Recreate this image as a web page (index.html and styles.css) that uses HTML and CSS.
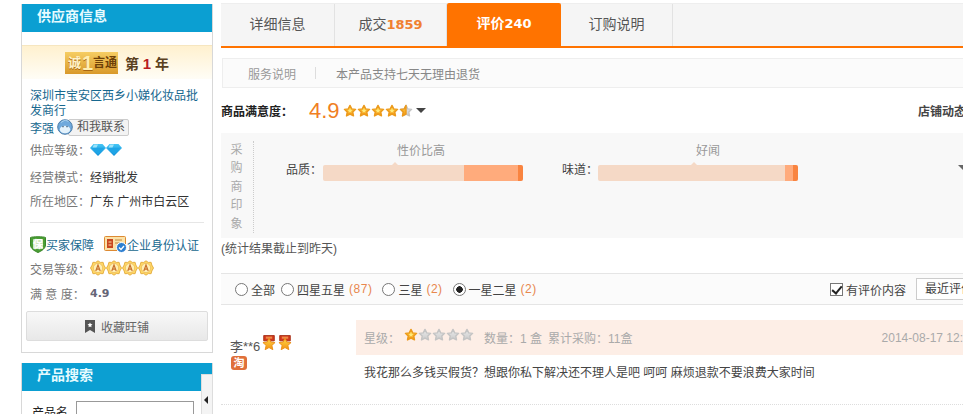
FILE: index.html
```html
<!DOCTYPE html>
<html lang="zh">
<head>
    <meta charset="UTF-8">
    <title>评价</title>
    <link rel="stylesheet" href="styles.css">
</head>
<body>

<svg class="defs" width="0" height="0">
    <defs>
        <linearGradient id="gold" x1="0" y1="0" x2="0" y2="1"><stop offset="0" stop-color="#ffd84a"/><stop offset="1" stop-color="#f3920f"/></linearGradient>
        <linearGradient id="grey" x1="0" y1="0" x2="0" y2="1"><stop offset="0" stop-color="#ececec"/><stop offset="1" stop-color="#c9c9c9"/></linearGradient>
        <linearGradient id="blue" x1="0" y1="0" x2="0" y2="1"><stop offset="0" stop-color="#45c6f5"/><stop offset="1" stop-color="#0f8ed8"/></linearGradient>
    </defs>
    <symbol id="star" viewBox="0 0 12 12"><path d="M6 1.200l1.500 3 3.300.4-2.400 2.300.6 3.300L6 8.600l-3 1.600.6-3.300-2.400-2.300 3.300-.4z" fill="url(#gold)" stroke="#ec9a1c" stroke-width="1.200" stroke-linejoin="round"/><path d="M6 3.500l.6 1.500 1.400.2-1 1 .2 1.300L6 6.800l-1.200.7.200-1.300-1-1 1.400-.2z" fill="#ffe97a"/></symbol>
    <symbol id="star-off" viewBox="0 0 12 12"><path d="M6 1.200l1.500 3 3.300.4-2.400 2.300.6 3.300L6 8.600l-3 1.600.6-3.300-2.400-2.300 3.300-.4z" fill="url(#grey)" stroke="#c4c4c4" stroke-width="1.200" stroke-linejoin="round"/></symbol>
    <symbol id="star-half" viewBox="0 0 12 12"><path d="M6 1.200l1.500 3 3.300.4-2.400 2.300.6 3.300L6 8.600l-3 1.600.6-3.300-2.400-2.300 3.300-.4z" fill="url(#grey)" stroke="#c4c4c4" stroke-width="1.200" stroke-linejoin="round"/><path d="M6 1.200v7.400l-3 1.600.6-3.300-2.400-2.300 3.300-.4z" fill="url(#gold)" stroke="#ec9a1c" stroke-width="1.200" stroke-linejoin="round"/></symbol>
    <symbol id="diamond" viewBox="0 0 16 13"><path d="M3.500 1h9L16 5 8 13 0 5z" fill="url(#blue)"/><path d="M1.500 4.800h13L8 11.500z" fill="#1ea5e6"/><path d="M4 1.500L2.500 4.500h4L8 1.500z" fill="#9be3fb"/></symbol>
    <symbol id="crown" viewBox="0 0 16 16"><path d="M8 .8l2.300 1.600 2.800-.1.700 2.700L15.500 8l-1.700 3-.7 2.700-2.800-.1L8 15.200l-2.300-1.600-2.800.1-.7-2.700L.5 8l1.700-3 .7-2.700 2.800.1z" fill="#ffd766" stroke="#e2a93a" stroke-width=".9" stroke-linejoin="round"/><circle cx="8" cy="8" r="4.700" fill="#ffeeb4" stroke="#eab84e" stroke-width=".7"/><path d="M5.800 11L8 5l2.200 6M6.600 9.200h2.800" fill="none" stroke="#c8702c" stroke-width="1.200"/></symbol>
    <symbol id="medal" viewBox="0 0 15 16"><path d="M2.500.5h10v5h-10z" fill="#d2381c" stroke="#a32a12" stroke-width=".8"/><path d="M4.500 1.500h6v2h-6z" fill="#ef8a4a"/><path d="M7.500 3l1.700 3.600 4 .5-3 2.700.9 4-3.600-2-3.600 2 .9-4-3-2.700 4-.5z" fill="url(#gold)" stroke="#ec8f18" stroke-width=".9" stroke-linejoin="round"/></symbol>
</svg>

<div class="page">

    <!-- left column -->
    <div class="side">
        <div class="box supplier">
            <h3 class="box-title">供应商信息</h3>
            <div class="cxt">
                <span class="cxt-logo"><i>诚</i><b>1</b><i>言</i><i>通</i></span>
                <span class="cxt-year">第 <b>1</b> 年</span>
            </div>
            <div class="info">
                <a class="company">深圳市宝安区西乡小娣化妆品批发商行</a>
                <div class="contact">
                    <a>李强</a>
                    <svg class="ww" width="16" height="16" viewBox="0 0 16 16"><circle cx="8" cy="8" r="7.300" fill="#6fa9dc" stroke="#4d7da8"/><ellipse cx="8" cy="10.500" rx="5.200" ry="3.800" fill="#e4f2fb"/><path d="M4 3.500L8 1l3.500 1.500" fill="none" stroke="#a9d2f0"/><path d="M6 7v1.200M10 7v1.200" stroke="#2c4d6b" stroke-width="1.200"/></svg>
                    <span class="talk">和我联系</span>
                </div>
                <div class="row level"><span class="lbl">供应等级：</span><svg width="16" height="13"><use href="#diamond"/></svg><svg width="16" height="13"><use href="#diamond"/></svg></div>
                <div class="row mode"><span class="lbl">经营模式：</span>经销批发</div>
                <div class="row area"><span class="lbl">所在地区：</span>广东 广州市白云区</div>
            </div>
            <div class="trust">
                <div class="links">
                    <a class="link-item">
                        <svg width="16" height="17" viewBox="0 0 16 17"><path d="M.5 1.500c2-1 13-1 15 0V9c0 3.500-4 6-7.500 7.500C4.500 15 .5 12.500.5 9z" fill="#4a9e35" stroke="#3a8628"/><rect x="3" y="3" width="10" height="10" rx="1" fill="#cfe8bf"/><text x="8" y="12" font-size="10" font-weight="bold" text-anchor="middle" fill="#fff">保</text></svg>买家保障
                    </a>
                    <a class="link-item cert">
                        <svg width="23" height="17" viewBox="0 0 23 17"><rect x=".5" y=".5" width="21" height="14" rx="1" fill="#fbe2a8" stroke="#dd8a33"/><rect x="3" y="3" width="6" height="9" fill="#c9471f"/><path d="M4.500 6h3M4.500 9h3" stroke="#fbe2a8"/><path d="M11 4h7M11 7h5" stroke="#c68a45"/><circle cx="17.500" cy="11.500" r="5" fill="#2d7ed1" stroke="#fff"/><path d="M15 11.500l2 2 3-3.500" stroke="#fff" stroke-width="1.300" fill="none"/></svg>企业身份认证
                    </a>
                </div>
                <div class="row deal"><span class="lbl">交易等级：</span><svg width="16" height="16"><use href="#crown"/></svg><svg width="16" height="16"><use href="#crown"/></svg><svg width="16" height="16"><use href="#crown"/></svg><svg width="16" height="16"><use href="#crown"/></svg></div>
                <div class="row score"><span class="lbl">满 意 度：</span><b>4.9</b></div>
            </div>
            <div class="fav">
                <svg width="10" height="13" viewBox="0 0 10 13"><path d="M0 0h10v13L5 10l-5 3z" fill="#555"/><path d="M5 2.500l.8 1.600 1.700.2-1.300 1.200.3 1.700L5 6.400l-1.500.8.300-1.700L2.500 4.300l1.700-.2z" fill="#fff"/></svg>
                收藏旺铺
            </div>
        </div>

        <div class="box search">
            <h3 class="box-title">产品搜索</h3>
            <div class="search-row"><span>产品名</span><input class="search-input" type="text"></div>
            <div class="handle"></div>
        </div>
    </div>

    <!-- right column -->
    <div class="main">
        <div class="tabs">
            <div class="tab">详细信息</div>
            <div class="tab tab-deal">成交<b>1859</b></div>
            <div class="tab active">评价<b>240</b></div>
            <div class="tab tab-deal">订购说明</div>
        </div>

        <div class="service">
            <span class="service-name">服务说明</span>
            <span class="service-text">本产品支持七天无理由退货</span>
        </div>

        <div class="rating">
            <b class="rating-name">商品满意度：</b>
            <span class="rating-num">4.9</span>
            <span class="stars">
                <svg width="14" height="14"><use href="#star"/></svg><svg width="14" height="14"><use href="#star"/></svg><svg width="14" height="14"><use href="#star"/></svg><svg width="14" height="14"><use href="#star"/></svg><svg width="14" height="14"><use href="#star-half"/></svg>
            </span>
            <span class="caret"></span>
            <b class="shop-name">店铺动态</b>
        </div>

        <div class="impress">
            <div class="impress-side">采购商印象</div>
            <div class="meter">
                <span class="meter-name">品质：</span>
                <div class="bar bar-a">
                    <span class="bar-tip">性价比高</span>
                    <div class="bar-mid"></div>
                    <div class="bar-end"></div>
                </div>
            </div>
            <div class="meter">
                <span class="meter-name">味道：</span>
                <div class="bar bar-b">
                    <span class="bar-tip">好闻</span>
                    <div class="bar-mid"></div>
                    <div class="bar-end"></div>
                </div>
            </div>
            <span class="impress-more"></span>
        </div>
        <p class="note">(统计结果截止到昨天)</p>

        <div class="filter">
            <label class="opt opt-all"><input type="radio" name="f">全部</label>
            <label class="opt"><input type="radio" name="f">四星五星 <em>(87)</em></label>
            <label class="opt"><input type="radio" name="f">三星 <em>(2)</em></label>
            <label class="opt"><input type="radio" name="f" checked>一星二星 <em>(2)</em></label>
            <label class="has-text"><input type="checkbox" checked>有评价内容</label>
            <span class="sort">最近评价</span>
        </div>

        <div class="review">
            <div class="buyer">
                <div class="buyer-name"><span>李**6</span><svg width="16" height="17"><use href="#medal"/></svg><svg width="16" height="17"><use href="#medal"/></svg></div>
                <span class="tao">淘</span>
            </div>
            <div class="review-body">
                <div class="review-head">
                    <span>星级：</span>
                    <span class="review-stars"><svg width="14" height="14"><use href="#star"/></svg><svg width="14" height="14"><use href="#star-off"/></svg><svg width="14" height="14"><use href="#star-off"/></svg><svg width="14" height="14"><use href="#star-off"/></svg><svg width="14" height="14"><use href="#star-off"/></svg></span>
                    <span class="qty">数量：1 盒</span>
                    <span class="total">累计采购：11盒</span>
                    <span class="date">2014-08-17 12:</span>
                </div>
                <p class="review-text">我花那么多钱买假货？想跟你私下解决还不理人是吧 呵呵 麻烦退款不要浪费大家时间</p>
            </div>
        </div>
    </div>
</div>

</body>
</html>
```

FILE: styles.css
```css
html, body {
    margin: 0;
    height: 414px;
    overflow: hidden;
    background: #fff;
}
body {
    font-family: "Liberation Sans", "Noto Sans CJK SC", sans-serif;
    font-size: 12px;
    color: #333;
}
.defs {
    position: absolute;
}
svg {
    flex: none;
}
.page {
    display: flex;
    align-items: flex-start;
    width: 1000px;
    padding: 4px 0 0 21px;
}

/* left column */
.side {
    width: 192px;
    flex: none;
}
.box {
    border: 1px solid #d8d8d8;
    border-top: 0;
}
.box-title {
    margin: 0;
    height: 28px;
    line-height: 24px;
    padding-left: 15px;
    background: #0b9fd2;
    color: #e6fbff;
    font-size: 14px;
}
.supplier {
    height: 349px;
    box-sizing: border-box;
}
.cxt {
    display: flex;
    align-items: center;
    justify-content: center;
    gap: 7px;
    height: 33px;
    margin-top: 13px;
    background: linear-gradient(#fff1cf, #fffdf6);
    border-top: 1px solid #f6e6c0;
}
.cxt-logo {
    display: flex;
    align-items: center;
    width: 53px;
    height: 22px;
    box-sizing: border-box;
    background: linear-gradient(#f6cd63, #d9992a);
    color: #6e4008;
    font-weight: bold;
    white-space: nowrap;
}
.cxt-logo i {
    font-style: normal;
    font-size: 12px;
    line-height: 22px;
}
.cxt-logo i:first-child {
    font-size: 13px;
    margin: 0 1px 0 3px;
    color: #fff3c8;
    text-shadow: 0 1px 0 #a8660f;
}
.cxt-logo b {
    font-size: 20px;
    line-height: 22px;
    color: #ffeeb0;
    text-shadow: 0 1px 0 #a8660f;
}
.cxt-year {
    font-size: 14px;
    font-weight: bold;
    color: #5a4020;
}
.cxt-year b {
    color: #b81c22;
    font-size: 15px;
}
.info {
    padding: 10px 8px 0;
}
.company {
    display: block;
    line-height: 15px;
    color: #17688f;
}
.contact {
    display: flex;
    align-items: center;
    gap: 3px;
    height: 20px;
    margin-top: -2px;
    color: #17688f;
}
.talk {
    margin-left: -8px;
    padding: 0 3px 0 8px;
    height: 15px;
    line-height: 15px;
    border: 1px solid #ccc;
    border-radius: 2px;
    background: #f3f3f3;
    color: #555;
}
.ww {
    position: relative;
    z-index: 1;
}
.row {
    display: flex;
    align-items: center;
    height: 24px;
}
.lbl {
    color: #777;
    width: 60px;
    flex: none;
}
.level {
    margin-bottom: 3px;
}
.trust {
    margin: 10px 8px 0;
    padding-top: 11px;
    border-top: 1px solid #e6e6e6;
}
.links {
    display: flex;
    gap: 10px;
    height: 20px;
    align-items: center;
    color: #17688f;
}
.link-item {
    display: flex;
    align-items: center;
    white-space: nowrap;
}
.deal {
    margin-top: 2px;
}
.score {
    margin-top: 1px;
}
.score b {
    font-family: "DejaVu Sans", sans-serif;
    font-size: 11px;
    color: #667;
}
.fav {
    display: flex;
    align-items: center;
    justify-content: center;
    gap: 6px;
    height: 28px;
    margin: 6px 4px 0;
    border: 1px solid #ddd;
    border-radius: 2px;
    background: linear-gradient(#f8f8f8, #e8e8e8);
    color: #666;
}
.search {
    position: relative;
    margin-top: 10px;
    height: 120px;
}
.search-row {
    display: flex;
    align-items: center;
    gap: 8px;
    padding: 10px 0 0 10px;
    color: #222;
}
.search-input {
    width: 116px;
    height: 18px;
    padding: 0;
    border: 1px solid #999;
}
.handle {
    position: absolute;
    top: 11px;
    right: -1px;
    width: 10px;
    height: 60px;
    border: 1px solid #ddd;
    background: #f4f4f4;
}
.handle::after {
    content: "";
    position: absolute;
    left: 2px;
    top: 21px;
    border: 4px solid transparent;
    border-right: 4px solid #222;
    border-left: 0;
}

/* right column */
.main {
    width: 770px;
    flex: none;
    padding-left: 8px;
}
.tabs {
    display: flex;
    height: 42px;
    margin-top: -1px;
    background: #f5f5f5;
    border-top: 1px solid #eee;
    border-bottom: 2px solid #ff7300;
}
.tab {
    width: 114px;
    box-sizing: border-box;
    line-height: 41px;
    text-align: center;
    font-size: 14px;
    color: #555;
    border-right: 1px solid #e2e2e2;
}
.tab-deal {
    width: 112px;
}
.tab b {
    font-family: "DejaVu Sans", sans-serif;
    font-size: 13px;
    color: #f08030;
}
.tab.active {
    margin-top: -1px;
    background: #ff7300;
    color: #fff;
    font-weight: bold;
    border-right: 0;
    border-radius: 2px 2px 0 0;
}
.tab.active b {
    color: #fff;
}
.service {
    display: flex;
    align-items: center;
    height: 28px;
    margin: 10px 0 0 1px;
    background: #fbfbfb;
    border: 1px solid #eee;
    color: #888;
}
.service-name {
    padding: 0 20px 0 25px;
    color: #999;
    background: linear-gradient(#ddd, #ddd) right center / 1px 12px no-repeat;
}
.service-text {
    margin-left: 20px;
}
.rating {
    display: flex;
    align-items: center;
    height: 45px;
}
.rating-name {
    width: 88px;
    color: #222;
}
.rating-num {
    font-size: 22px;
    color: #f07f24;
    margin-right: 3px;
}
.stars {
    display: flex;
}
.caret {
    margin-left: 3px;
    border: 5px solid transparent;
    border-top: 5px solid #444;
    border-bottom: 0;
}
.shop-name {
    margin-left: auto;
    margin-right: 25px;
    color: #444;
}
.impress {
    position: relative;
    display: flex;
    height: 105px;
    background: #f8f8f8;
    padding-top: 8px;
    box-sizing: border-box;
}
.impress-side {
    width: 17px;
    margin-left: 7px;
    padding-right: 8px;
    height: 92px;
    border-right: 1px dotted #ccc;
    line-height: 18.400px;
    text-align: center;
    color: #aaa;
}
.meter {
    display: flex;
    margin-top: 24px;
    height: 20px;
}
.meter-name {
    width: 36px;
    margin: -5px 0 0 32px;
    line-height: 20px;
    color: #444;
}
.bar {
    position: relative;
    display: flex;
    justify-content: flex-end;
    width: 200px;
    height: 16px;
    margin-left: 1px;
    background: #f5d9c6;
    border-radius: 2px;
}
.bar-b {
    margin-left: 0;
}
.meter + .meter .meter-name {
    margin-left: 39px;
}
.bar-tip {
    position: absolute;
    top: -24px;
    left: 74px;
    color: #999;
}
.bar-b .bar-tip {
    left: 98px;
}
.bar-tip::after {
    content: "";
    position: absolute;
    left: -5px;
    top: 21px;
    border: 3px solid transparent;
    border-bottom: 3px solid #f5d9c6;
    border-top: 0;
}
.bar-mid {
    background: #ffab7c;
}
.bar-a .bar-mid {
    width: 54px;
}
.bar-b .bar-mid {
    width: 8px;
}
.bar-end {
    width: 5px;
    background: #f98440;
    border-radius: 0 2px 2px 0;
}
.impress-more {
    position: absolute;
    right: 23px;
    top: 32px;
    border: 5px solid transparent;
    border-top: 5px solid #666;
    border-bottom: 0;
}
.note {
    margin: 0 0 11px;
    height: 24px;
    padding-top: 4px;
    line-height: 15px;
    box-sizing: border-box;
    color: #555;
}
.filter {
    display: flex;
    align-items: center;
    height: 30px;
    background: #fbfbfb;
    border-top: 1px solid #e5e5e5;
    border-bottom: 1px solid #e5e5e5;
    padding-left: 14px;
    color: #444;
}
.opt {
    display: flex;
    align-items: center;
    white-space: nowrap;
    margin-right: 10px;
}
.opt-all {
    margin-right: 6px;
}
.opt input, .has-text input {
    appearance: none;
    box-sizing: border-box;
    position: relative;
    margin: 0 3px 0 0;
    width: 13px;
    height: 13px;
    border: 1px solid #777;
    background: #fff;
}
.opt input {
    border-radius: 50%;
}
.opt input:checked {
    background: radial-gradient(circle, #222 0 3px, #fff 3.500px);
}
.has-text input::after {
    content: "";
    position: absolute;
    left: 3px;
    top: 0;
    width: 4px;
    height: 8px;
    border: solid #222;
    border-width: 0 2px 2px 0;
    transform: rotate(40deg);
}
.opt em {
    font-style: normal;
    color: #e8874e;
    margin-left: 4px;
    letter-spacing: .5px;
}
.has-text {
    display: flex;
    align-items: center;
    margin-left: auto;
}
.sort {
    width: 65px;
    margin-left: 10px;
    height: 20px;
    line-height: 20px;
    padding-left: 8px;
    border: 1px solid #ccc;
    background: #fff;
}
.review {
    display: flex;
    height: 100px;
    padding-top: 15px;
    border-bottom: 1px dotted #ddd;
    box-sizing: border-box;
}
.buyer {
    width: 135px;
    flex: none;
    padding: 15px 0 0 9px;
    box-sizing: border-box;
    color: #555;
}
.buyer-name {
    display: flex;
    align-items: flex-start;
    font-size: 13px;
    height: 18px;
}
.buyer-name span {
    margin-top: 1px;
    margin-right: 1px;
}
.tao {
    display: block;
    width: 16px;
    height: 14px;
    line-height: 14px;
    margin: 3px 0 0 1px;
    text-align: center;
    font-size: 11px;
    font-weight: bold;
    border-radius: 3px;
    background: #e0703a;
    color: #fff;
}
.review-body {
    flex: 1;
}
.review-head {
    display: flex;
    align-items: center;
    height: 35px;
    padding-left: 8px;
    background: #fdeee6;
    color: #aaa;
}
.review-stars {
    display: flex;
    margin: -5px 10px 0 4px;
}
.total {
    margin-left: 6px;
}
.date {
    margin-left: auto;
    margin-right: 28px;
    white-space: nowrap;
}
.review-text {
    margin: 11px 0 0 8px;
    line-height: 15px;
    color: #444;
}
```
